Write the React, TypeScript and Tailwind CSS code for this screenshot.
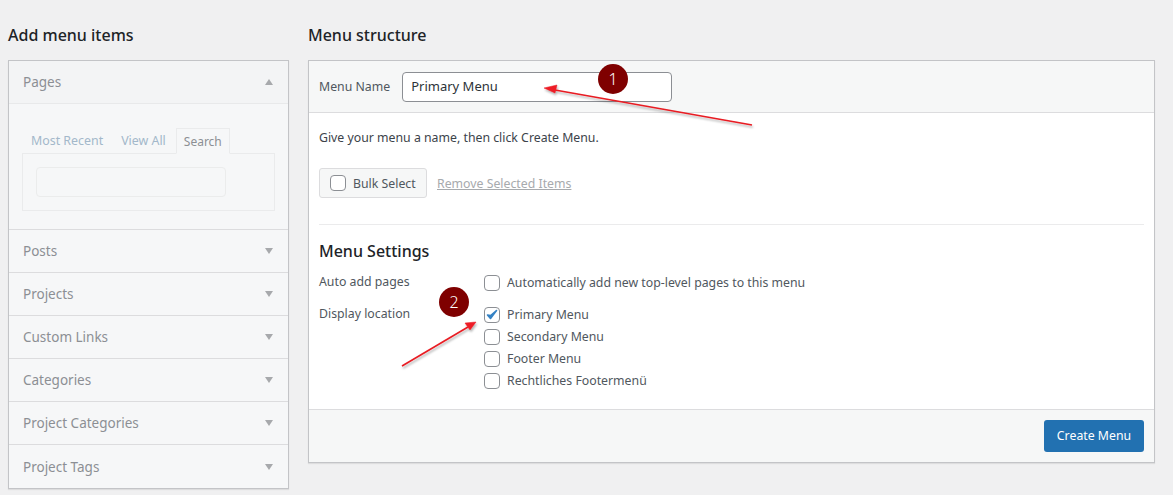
import React from "react";

const Chevron = ({ up }: { up?: boolean }) => (
  <svg width="8" height="6" viewBox="0 0 8 6" className="block">
    <path d={up ? "M4 0 L8 6 L0 6 Z" : "M0 0 L8 0 L4 6 Z"} fill="#a7a9ac" />
  </svg>
);

const Row = ({ label }: { label: string }) => (
  <div className="h-[43px] flex items-center justify-between pl-[14px] pr-[15px] border-b border-[#dcdcde] last:border-b-0 text-[13.5px] text-[#8c8f94]">
    <span className="pt-[1px]">{label}</span>
    <Chevron />
  </div>
);

const Check = ({ checked }: { checked?: boolean }) => (
  <span className="w-[14px] h-[14px] box-content shrink-0 rounded-[4px] border border-[#8c8f94] bg-white flex items-center justify-center">
    {checked && (
      <svg width="14" height="14" viewBox="0 0 14 14">
        <path d="M2.5 7 L5.5 10.5 L11.5 2.5 L5.6 7.6 Z" fill="#3582c4" stroke="#3582c4" strokeWidth="1.6" strokeLinejoin="round" />
      </svg>
    )}
  </span>
);

const Opt = ({ label, checked }: { label: string; checked?: boolean }) => (
  <div className="h-[22px] flex items-center gap-[7px] pl-[1px]">
    <Check checked={checked} />
    <span>{label}</span>
  </div>
);

const Badge = ({ n, cls }: { n: string; cls: string }) => (
  <div className={"absolute w-[30px] h-[30px] rounded-full bg-[#7f0000] text-white flex items-center justify-center text-[16px] font-light " + cls}>{n}</div>
);

export default function App() {
  return (
    <div className="relative w-[1173px] h-[495px] overflow-hidden bg-[#f0f0f1] text-[12.3px] text-[#50575e] font-['Noto_Sans','Open_Sans',sans-serif]">
      <div className="flex gap-[19px] pl-2 pt-[24px] items-start">
        <div className="w-[281px] shrink-0">
          <h2 className="text-[16px] leading-[22px] h-[36px] font-medium text-[#1d2327]">Add menu items</h2>
          <div className="border border-[#c3c4c7] bg-[#f6f7f8] shadow-[0_1px_1px_rgba(0,0,0,0.08)]">
            <div className="h-[43px] flex items-center justify-between pl-[14px] pr-[15px] border-b border-[#e8e9ea] bg-[#f3f4f5] text-[13.5px] text-[#8c8f94]">
              <span className="pt-[1px]">Pages</span>
              <Chevron up />
            </div>
            <div className="h-[126px] border-b border-[#dcdcde] px-[13px] pt-[23px]">
              <div className="flex items-end h-[26px] pl-[9px] text-[12.4px] text-[#a3b8ca]">
                <span className="mr-[18px] mb-[2px]">Most Recent</span>
                <span className="mr-[10px] mb-[2px]">View All</span>
                <span className="h-[26px] w-[54px] -mb-px relative border border-[#eaebec] border-b-[#f6f7f8] flex items-center justify-center text-[#8c8f94] text-[12px] pt-[1px]">Search</span>
              </div>
              <div className="h-[58px] border border-[#eaebec] pl-[13px] pt-[13px]">
                <div className="w-[190px] h-[30px] rounded-[4px] border border-[#ebecec] bg-[#f6f7f8]" />
              </div>
            </div>
            {["Posts", "Projects", "Custom Links", "Categories", "Project Categories", "Project Tags"].map((l) => (
              <Row key={l} label={l} />
            ))}
          </div>
        </div>
        <div className="w-[847px] shrink-0">
          <h2 className="text-[16px] leading-[22px] h-[36px] font-medium text-[#1d2327]">Menu structure</h2>
          <div className="border border-[#c3c4c7] bg-white shadow-[0_1px_1px_rgba(0,0,0,0.08)]">
            <div className="h-[52px] flex items-center pl-[10px] gap-[12px] bg-[#f6f7f7] border-b border-[#dcdcde]">
              <span className="pt-[2px]">Menu Name</span>
              <div className="w-[270px] h-[30px] rounded-[4px] border border-[#8c8f94] bg-white flex items-center pl-2 text-[13px] text-[#2c3338]">Primary Menu</div>
            </div>
            <div className="px-[10px] pt-[16px]">
              <p className="leading-[18px] text-[#3c434a]">Give your menu a name, then click Create Menu.</p>
              <div className="flex items-center gap-[10px] mt-[21px]">
                <div className="w-[108px] h-[30px] rounded-[3px] border border-[#dcdcde] bg-[#f6f7f7] flex items-center pl-[10px] gap-[7px]">
                  <Check />
                  <span className="pt-[2px]">Bulk Select</span>
                </div>
                <span className="pt-[2px] underline text-[#a7aaad]">Remove Selected Items</span>
              </div>
              <div className="border-t border-[#ebebec] mt-[26px] pt-[15px]">
                <h3 className="text-[16px] leading-[22px] font-medium text-[#1d2327]">Menu Settings</h3>
                <div className="flex mt-[10px]">
                  <div className="w-[164px] shrink-0 leading-[18px]">
                    <div className="h-[33px] pt-[1px]">Auto add pages</div>
                    <div>Display location</div>
                  </div>
                  <div>
                    <div className="pb-[10px]"><Opt label="Automatically add new top-level pages to this menu" /></div>
                    <Opt label="Primary Menu" checked />
                    <Opt label="Secondary Menu" />
                    <Opt label="Footer Menu" />
                    <Opt label="Rechtliches Footermenü" />
                  </div>
                </div>
              </div>
            </div>
            <div className="mt-[17px] h-[53px] bg-[#f6f7f7] border-t border-[#dcdcde] flex items-center justify-end pr-[10px]">
              <div className="w-[100px] h-[32px] pt-[1px] rounded-[3px] bg-[#2271b1] text-white flex items-center justify-center">Create Menu</div>
            </div>
          </div>
        </div>
      </div>

      <svg className="absolute left-0 top-0 pointer-events-none" width="1173" height="495" viewBox="0 0 1173 495">
        <defs>
          <filter id="s" x="-20%" y="-20%" width="140%" height="160%">
            <feDropShadow dx="1" dy="2" stdDeviation="1" floodColor="#000" floodOpacity="0.3" />
          </filter>
        </defs>
        <g filter="url(#s)" fill="#ee1c25" stroke="#e81c24">
          <path d="M752 125 L555 90" strokeWidth="1.6" />
          <path d="M544 88 L557 85 L555 93 Z" strokeWidth="0.5" />
          <path d="M402 366 L468 327" strokeWidth="1.6" />
          <path d="M476 322 L465 323 L470 330 Z" strokeWidth="0.5" />
        </g>
      </svg>
      <Badge n="1" cls="left-[598px] top-[64px]" />
      <Badge n="2" cls="left-[439px] top-[287px]" />
    </div>
  );
}
